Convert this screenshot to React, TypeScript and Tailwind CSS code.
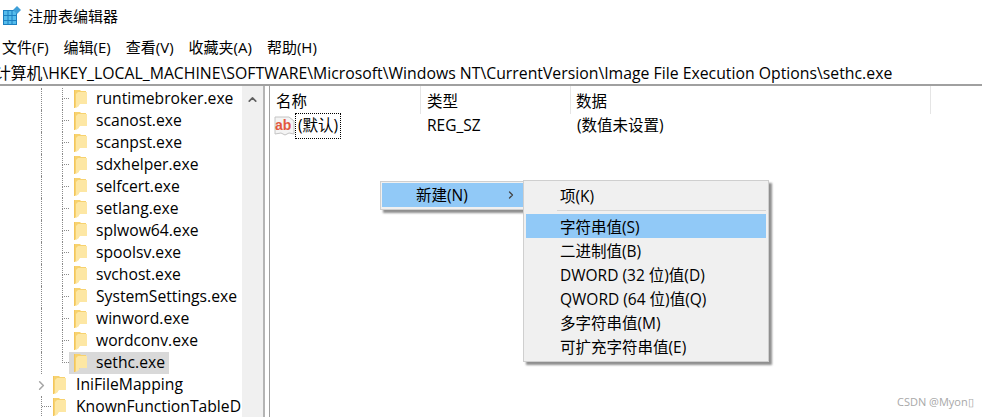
import { ChevronRight, ChevronUp } from 'lucide-react';

const FILES = [
  'runtimebroker.exe',
  'scanost.exe',
  'scanpst.exe',
  'sdxhelper.exe',
  'selfcert.exe',
  'setlang.exe',
  'splwow64.exe',
  'spoolsv.exe',
  'svchost.exe',
  'SystemSettings.exe',
  'winword.exe',
  'wordconv.exe',
];

const MENU = ['文件(F)', '编辑(E)', '查看(V)', '收藏夹(A)', '帮助(H)'];

const SUB_ITEMS = ['二进制值(B)', 'DWORD (32 位)值(D)', 'QWORD (64 位)值(Q)', '多字符串值(M)', '可扩充字符串值(E)'];

const dotted = 'border-l border-dotted border-[#8a8a8a]';

function Folder() {
  return (
    <svg width="13" height="18" viewBox="0 0 13 18" className="shrink-0">
      <path d="M0 0 H6 L7 1 H12 V14 H6 L1 18 H0 Z" fill="#f7d26f" />
      <path d="M4 2 H13 V14 H5 V16 L2 18 V4 Z" fill="#fde7a4" />
      <path d="M0.500 0 V18" stroke="#f3c65c" />
    </svg>
  );
}

function TreeRow({ name, selected, last }: { name: string; selected?: boolean; last?: boolean }) {
  return (
    <div className="flex h-[22px] shrink-0">
      <div className="w-[41px] shrink-0" />
      <div className={`w-[21px] shrink-0 ${dotted}`} />
      <div className="w-[7px] shrink-0">
        <div className={`h-[11px] border-b border-dotted border-[#8a8a8a] ${dotted}`} />
        {!last && <div className={`h-[11px] ${dotted}`} />}
      </div>
      <div className={`flex h-[22px] items-center ${selected ? 'w-[100px] bg-[#d9d9d9]' : ''}`}>
        <div className="ml-[5px]">
          <Folder />
        </div>
        <span className="ml-[9px] whitespace-nowrap">{name}</span>
      </div>
    </div>
  );
}

function RootRow({ name, arrow }: { name: string; arrow?: boolean }) {
  return (
    <div className="flex h-[22px] shrink-0">
      <div className={`relative flex w-[21px] shrink-0 ml-[41px] ${arrow ? '' : dotted}`}>
        {arrow ? (
          <ChevronRight size={15} strokeWidth={2.5} className="absolute left-[-7px] top-[4px] text-[#a6a6a6]" />
        ) : (
          <div className="h-[11px] w-[9px] border-b border-dotted border-[#8a8a8a]" />
        )}
      </div>
      <div className="flex items-center ml-[-9px]">
        <Folder />
        <span className="ml-[10px] whitespace-nowrap">{name}</span>
      </div>
    </div>
  );
}

function AbIcon() {
  return (
    <svg width="21" height="20" viewBox="0 0 21 20" className="shrink-0">
      <path d="M1 1 H15 L20 5 V18 L15 17 L11 19 L7 17 L1 18 Z" fill="#f4f4f4" stroke="#c4c4c4" />
      <text x="1" y="14" fontSize="14" fontWeight="700" fontFamily="Liberation Sans, sans-serif" fill="#e2583e">
        ab
      </text>
    </svg>
  );
}

export default function App() {
  return (
    <div className="relative flex h-[417px] w-[982px] flex-col overflow-hidden bg-white font-['Open_Sans','Noto_Sans_CJK_SC',sans-serif] text-[15.5px] leading-none text-black">
      {/* title bar */}
      <div className="flex h-[32px] shrink-0 items-center pl-[3px]">
        <svg width="18" height="20" viewBox="0 0 18 20">
          <path d="M0 4 H14 V19 H0 Z" fill="#1c7fc0" />
          <path d="M1 5 H4.500 V9 H1 Z M5.500 5 H8.500 V9 H5.500 Z M9.500 5 H13 V9 H9.500 Z M1 10 H4.500 V14 H1 Z M5.500 10 H8.500 V14 H5.500 Z M9.500 10 H13 V14 H9.500 Z M1 15 H4.500 V18 H1 Z M5.500 15 H8.500 V18 H5.500 Z M9.500 15 H13 V18 H9.500 Z" fill="#55bcec" />
          <path d="M14 0 L18 4 L14 8 L10 4 Z" fill="#3f9fd8" />
        </svg>
        <span className="ml-[7px] text-[15px]">注册表编辑器</span>
      </div>

      {/* menu bar */}
      <div className="mt-[4px] flex h-[22px] shrink-0 items-center gap-[15px] pl-[2px] text-[15px]">
        {MENU.map((m) => (
          <span key={m}>{m}</span>
        ))}
      </div>

      {/* address bar */}
      <div className="flex h-[28px] shrink-0 items-center overflow-hidden whitespace-nowrap border-b-2 border-[#a0a0a0] pt-[5px] text-[15.8px]">
        <span className="ml-[-5px]">计算机\HKEY_LOCAL_MACHINE\SOFTWARE\Microsoft\Windows NT\CurrentVersion\Image File Execution Options\sethc.exe</span>
      </div>

      <div className="flex min-h-0 flex-1">
        {/* tree */}
        <div className="flex w-[242px] shrink-0 flex-col overflow-hidden pt-[2px] text-[15.7px]">
          {FILES.map((f) => (
            <TreeRow key={f} name={f} />
          ))}
          <TreeRow name="sethc.exe" selected last />
          <RootRow name="IniFileMapping" arrow />
          <RootRow name="KnownFunctionTableD" />
        </div>

        {/* scrollbar */}
        <div className="flex w-[21px] shrink-0 justify-center bg-[#f0f0f0] pt-[7px]">
          <ChevronUp size={13} strokeWidth={3} className="text-[#606060]" />
        </div>

        {/* splitter */}
        <div className="w-[2px] shrink-0 bg-[#b4b4b4]" />

        {/* list pane */}
        <div className="ml-[4px] flex-1 border-l border-[#a0a0a0]">
          <div className="flex h-[28px] items-center">
            <div className="h-full w-[150px] pl-[6px] pt-[8px]">名称</div>
            <div className="h-full w-[150px] border-l border-[#e5e5e5] pl-[6px] pt-[8px]">类型</div>
            <div className="h-full w-[361px] border-x border-[#e5e5e5] pl-[5px] pt-[8px]">数据</div>
          </div>
          <div className="flex h-[24px] items-center">
            <div className="flex w-[150px] items-center pl-[4px]">
              <AbIcon />
              <span className="border border-dotted border-black px-[2px] py-[4px]">(默认)</span>
            </div>
            <div className="w-[150px] pl-[7px]">REG_SZ</div>
            <div className="pl-[7px]">(数值未设置)</div>
          </div>
        </div>
      </div>

      {/* context menu */}
      <div className="absolute left-[380px] top-[181px] h-[29px] w-[145px] border border-[#cfcfcf] bg-[#f0f0f0] p-[1px] shadow-[3px_3px_2px_#8f8f8f]">
        <div className="flex h-[24px] items-center justify-between bg-[#91c9f7] pl-[34px] pr-[6px]">
          <span className="pt-[2px]">新建(N)</span>
          <ChevronRight size={12} strokeWidth={2.5} className="text-[#444]" />
        </div>
      </div>

      {/* submenu */}
      <div className="absolute left-[523px] top-[180px] flex h-[182px] w-[246px] flex-col border border-[#cfcfcf] bg-[#f0f0f0] p-[2px] shadow-[3px_3px_2px_#8f8f8f]">
        <div className="flex h-[24px] shrink-0 items-center pl-[34px] pt-[3px]">项(K)</div>
        <div className="ml-[31px] mt-[3px] h-px shrink-0 bg-[#d4d4d4]" />
        <div className="mt-[3px] flex h-[24px] shrink-0 items-center bg-[#91c9f7] pl-[34px] pt-[3px]">字符串值(S)</div>
        {SUB_ITEMS.map((item) => (
          <div key={item} className="flex h-[24px] shrink-0 items-center pl-[34px] pt-[3px]">
            {item}
          </div>
        ))}
      </div>

      {/* watermark */}
      <span className="absolute left-[897px] top-[396px] text-[11px] text-[#a8a8a8]">CSDN @Myon▯</span>
    </div>
  );
}
